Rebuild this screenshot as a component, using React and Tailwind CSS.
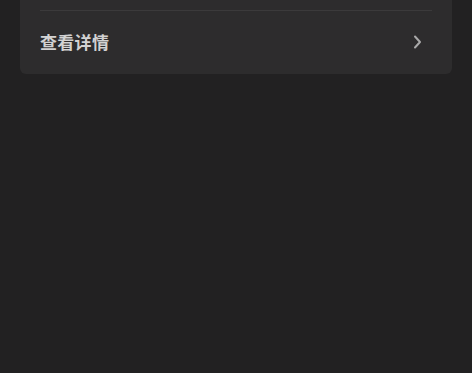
import React from "react";

const App = () => {
  return (
    <div
      className="w-[472px] h-[373px] bg-[#222122] px-5"
      style={{ fontFamily: '"Noto Sans CJK SC", "Noto Sans", sans-serif' }}
    >
      <div className="bg-[#2d2c2d] rounded-b-md px-5 pt-[10px]">
        <div className="h-px bg-[#3b3a3b]" />
        <div className="h-[63px] flex items-center justify-between pb-[2px]">
          <span className="text-[17px] font-semibold text-[#d2d2d2] tracking-[0.3px]">
            查看详情
          </span>
          <svg
            xmlns="http://www.w3.org/2000/svg"
            className="w-5 h-5 mr-[5px] text-[#a9a9a9]"
            viewBox="0 0 20 20"
            fill="none"
            stroke="currentColor"
            strokeWidth="2"
            strokeLinecap="round"
            strokeLinejoin="round"
          >
            <path d="M8 4.5 13 10 8 15.5" />
          </svg>
        </div>
      </div>
    </div>
  );
};

export default App;
